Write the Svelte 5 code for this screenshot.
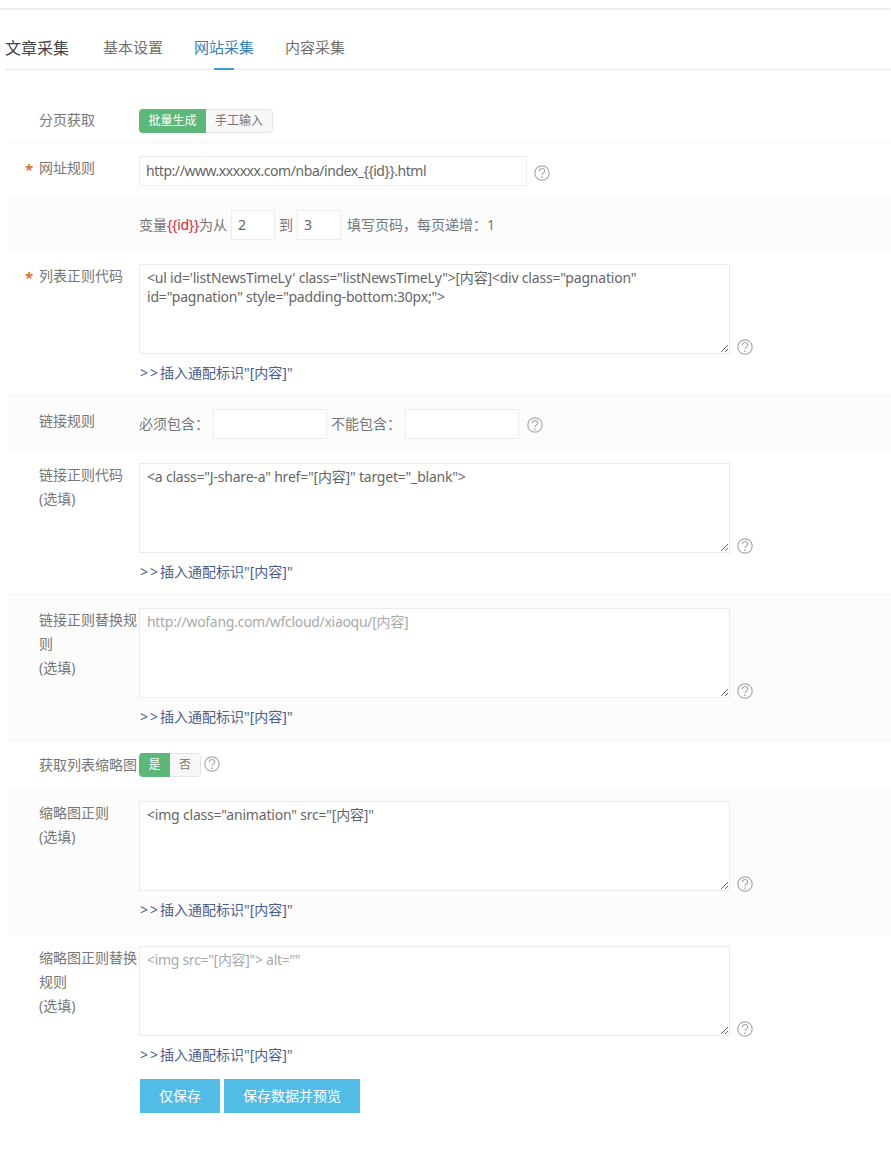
<script>
  const insert = '插入通配标识"[内容]"';
</script>

{#snippet help()}
  <svg class="help" viewBox="0 0 16 16" width="16" height="16" aria-hidden="true">
    <circle cx="8" cy="8" r="7.2" fill="none" stroke="#aaa" stroke-width="1.2" />
    <path d="M5.3 6.2c0-1.6 1.2-2.7 2.7-2.7s2.7 1 2.7 2.4c0 2-2.7 2-2.7 4.1" fill="none" stroke="#aaa" stroke-width="1.2" />
    <circle cx="8" cy="12.2" r=".85" fill="#aaa" />
  </svg>
{/snippet}

{#snippet area(text, placeholder)}
  <div class="area-wrap">
    <textarea class="area" {placeholder} value={text}></textarea>
    {@render help()}
  </div>
  <a class="insert" href="#top"><span class="arrows">&gt;&gt;</span>{insert}</a>
{/snippet}

<div class="page">
  <div class="topbar"></div>
  <nav class="tabs">
    <span class="title">文章采集</span>
    <span class="tab">基本设置</span>
    <span class="tab active">网站采集</span>
    <span class="tab">内容采集</span>
  </nav>

  <form class="form">
    <div class="row r-page">
      <div class="label">分页获取</div>
      <div class="field">
        <div class="switch wide"><span class="on">批量生成</span><span class="off">手工输入</span></div>
      </div>
    </div>

    <div class="row r-url">
      <div class="label req">网址规则</div>
      <div class="field inline">
        <input class="input url" value="http://www.xxxxxx.com/nba/index_&#123;&#123;id&#125;&#125;.html" />
        {@render help()}
      </div>
    </div>

    <div class="row alt r-var">
      <div class="label"></div>
      <div class="field inline text">
        <span>变量<em>&#123;&#123;id&#125;&#125;</em>为从</span>
        <input class="input num" value="2" />
        <span>到</span>
        <input class="input num" value="3" />
        <span class="fill">填写页码，每页递增：1</span>
      </div>
    </div>

    <div class="row r-area top14">
      <div class="label req">列表正则代码</div>
      <div class="field">
        {@render area(`<ul id='listNewsTimeLy' class="listNewsTimeLy">[内容]<div class="pagnation" id="pagnation" style="padding-bottom:30px;">`, '')}
      </div>
    </div>

    <div class="row alt r-link">
      <div class="label">链接规则</div>
      <div class="field inline text">
        <span>必须包含：</span>
        <input class="input mid" />
        <span>不能包含：</span>
        <input class="input mid" />
        {@render help()}
      </div>
    </div>

    <div class="row r-area short">
      <div class="label">链接正则代码<br />(选填)</div>
      <div class="field">
        {@render area('<a class="J-share-a" href="[内容]" target="_blank">', '')}
      </div>
    </div>

    <div class="row alt r-area">
      <div class="label">链接正则替换规则<br />(选填)</div>
      <div class="field">
        {@render area('', 'http://wofang.com/wfcloud/xiaoqu/[内容]')}
      </div>
    </div>

    <div class="row r-thumb">
      <div class="label">获取列表缩略图</div>
      <div class="field inline tight">
        <div class="switch"><span class="on">是</span><span class="off">否</span></div>
        {@render help()}
      </div>
    </div>

    <div class="row alt r-area top12">
      <div class="label">缩略图正则<br />(选填)</div>
      <div class="field">
        {@render area('<img class="animation" src="[内容]"', '')}
      </div>
    </div>

    <div class="row last">
      <div class="label">缩略图正则替换规则<br />(选填)</div>
      <div class="field">
        {@render area('', '<img src="[内容]"> alt=""')}
        <div class="actions">
          <button type="button">仅保存</button>
          <button type="button" class="long">保存数据并预览</button>
        </div>
      </div>
    </div>
  </form>
</div>

<style>
  :global(body) {
    margin: 0;
    background: #fff;
  }
  .page {
    height: 1173px;
    box-sizing: border-box;
    font-family: "Noto Sans", "Noto Sans CJK SC", sans-serif;
    font-size: 14px;
    color: #777;
    overflow: hidden;
  }
  .topbar {
    height: 8px;
    background: #fff;
    box-shadow: 0 1px 3px rgba(0, 0, 0, 0.14);
  }
  .tabs {
    display: flex;
    align-items: center;
    gap: 31px;
    height: 62px;
    margin-left: 5px;
    border-bottom: 1px solid #e8e8e8;
    font-size: 15px;
    box-sizing: border-box;
    padding-top: 16px;
  }
  .title {
    font-size: 16px;
    color: #444;
    margin-right: 3px;
  }
  .tab {
    position: relative;
    color: #707070;
  }
  .tab.active {
    color: #3a7fb8;
  }
  .tab.active::after {
    content: "";
    position: absolute;
    left: 20px;
    width: 20px;
    bottom: -13px;
    height: 2px;
    background: #3f9bd0;
  }
  .form {
    margin: 26px 0 0 8px;
  }
  .row {
    display: grid;
    grid-template-columns: 100px 1fr;
    padding-left: 31px;
    box-sizing: border-box;
    border-bottom: 1px solid #f7f7f7;
    line-height: 24px;
  }
  .row.alt {
    background: #fcfcfc;
  }
  .row.last {
    border-bottom: 0;
  }
  .r-page {
    height: 47px;
    padding-top: 12px;
  }
  .r-url {
    height: 54px;
    padding-top: 13px;
  }
  .r-var {
    height: 53px;
    padding-top: 13px;
  }
  .r-area {
    height: 146px;
    padding-top: 13px;
  }
  .r-area.short {
    height: 145px;
  }
  .r-area.top14 {
    padding-top: 14px;
  }
  .r-area.top12 {
    padding-top: 12px;
  }
  .r-link {
    height: 54px;
    padding-top: 13px;
  }
  .r-thumb {
    height: 48px;
    padding-top: 12px;
  }
  .last {
    padding-top: 11px;
  }
  .label {
    color: #777;
    position: relative;
  }
  .req::before {
    content: "*";
    position: absolute;
    left: -14px;
    top: 1px;
    color: #e5702a;
    font-size: 15px;
    font-weight: 700;
  }
  .field {
    min-width: 0;
  }
  .inline {
    display: flex;
    align-items: center;
    height: 30px;
    gap: 4px;
  }
  .text {
    color: #777;
  }
  .tight {
    height: 24px;
    gap: 3px;
    align-items: flex-start;
  }
  .tight .help {
    margin-top: 3px;
  }
  em {
    font-style: normal;
    color: #e0243c;
    letter-spacing: -0.25px;
  }
  .input {
    box-sizing: border-box;
    height: 30px;
    border: 1px solid #eee;
    background: #fff;
    font: inherit;
    color: #666;
    padding: 0 6px 2px;
    outline: none;
  }
  .url {
    width: 388px;
    margin-right: 3px;
    letter-spacing: -0.45px;
  }
  .r-url .help {
    margin-top: 3px;
  }
  .num {
    width: 44px;
  }
  .fill {
    margin-left: 2px;
  }
  .r-link .help {
    margin: 2px 0 0 4px;
  }
  .mid {
    width: 114px;
  }
  .switch {
    display: inline-flex;
    height: 24px;
    border-radius: 4px;
    overflow: hidden;
    font-size: 12px;
    line-height: 24px;
    text-align: center;
  }
  .switch .on {
    width: 31px;
    background: #5cb878;
    color: #fff;
  }
  .switch .off {
    width: 31px;
    box-sizing: border-box;
    background: #f7f7f7;
    border: 1px solid #e4e4e4;
    border-left: 0;
    border-radius: 0 4px 4px 0;
    line-height: 22px;
    color: #777;
  }
  .switch.wide .on {
    width: 67px;
  }
  .switch.wide .off {
    width: 67px;
  }
  .help {
    flex: none;
  }
  .area-wrap {
    display: flex;
    align-items: flex-end;
    gap: 7px;
  }
  .area-wrap .help {
    margin-bottom: -1px;
  }
  .area {
    box-sizing: border-box;
    display: block;
    width: 591px;
    height: 90px;
    padding: 3px 7px;
    border: 1px solid #ebebeb;
    background: #fff;
    font: inherit;
    line-height: 19px;
    letter-spacing: -0.2px;
    color: #666;
    outline: none;
  }
  .area::placeholder {
    color: #aaa;
    letter-spacing: -0.3px;
  }
  .insert {
    display: block;
    margin-top: 7px;
    color: #4a6090;
    text-decoration: none;
    padding-left: 1px;
  }
  .arrows {
    letter-spacing: 2px;
  }
  .actions {
    display: flex;
    gap: 4px;
    margin: 12px 0 0 1px;
  }
  button {
    width: 80px;
    height: 34px;
    border: 0;
    background: #51bde6;
    color: #fff;
    font: inherit;
    padding: 0;
  }
  button.long {
    width: 136px;
  }
</style>
